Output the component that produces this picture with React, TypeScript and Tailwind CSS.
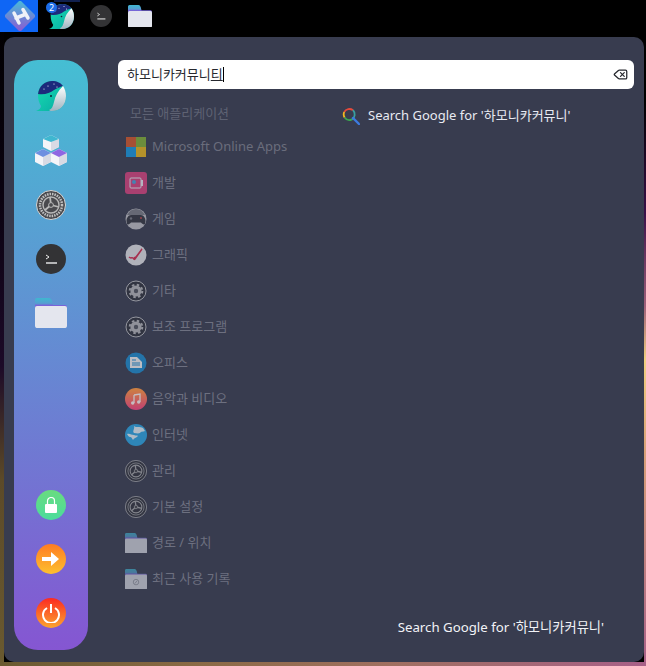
import { Delete } from "lucide-react";

const font = "font-['Noto_Sans','Noto_Sans_CJK_KR',sans-serif]";

function Whale({ size = 30, id }: { size?: number; id: string }) {
  return (
    <svg width={size} height={size} viewBox="0 0 30 30">
      <defs>
        <linearGradient id={`${id}b`} x1="0" y1="0" x2="1" y2="1">
          <stop offset="0" stopColor="#19e0b0" />
          <stop offset="1" stopColor="#06a8a4" />
        </linearGradient>
        <linearGradient id={`${id}h`} x1="0" y1="0" x2="0" y2="1">
          <stop offset="0" stopColor="#ffffff" />
          <stop offset="1" stopColor="#9fb4c0" />
        </linearGradient>
      </defs>
      <path d="M2 14C2 6 8 0 16 0c8 0 14 6 14 15s-6 15-14 15c-5 0-11 1-16 0 3-1 5-3 5-5-2-3-3-7-3-11z" fill={`url(#${id}b)`} />
      <path d="M2 13C3 5 9 0 16 0c5 0 9 2 11 5-3 1-6 2-9 4-4 3-9 5-16 4z" fill="#1c2a7c" />
      <path d="M27 5c2 3 3 6 3 10 0 9-6 15-14 15-1 0-2 0-3-1 3-1 4-4 5-8 1-6 4-11 9-16z" fill={`url(#${id}h)`} />
      <circle cx="12" cy="5" r=".6" fill="#fff" />
      <circle cx="18" cy="3" r=".6" fill="#fff" />
      <circle cx="21" cy="6" r=".6" fill="#fff" />
      <circle cx="8" cy="8" r=".6" fill="#fff" />
      <circle cx="15" cy="15" r="1" fill="#123" />
    </svg>
  );
}

function Terminal({ size = 30 }: { size?: number }) {
  return (
    <svg width={size} height={size} viewBox="0 0 30 30">
      <circle cx="15" cy="15" r="15" fill="#333335" />
      <path d="M10 11l3 2-3 2" fill="none" stroke="#eee" strokeWidth="1" />
      <path d="M10 19h11" stroke="#eee" strokeWidth="1.4" />
    </svg>
  );
}

function Folder({ w = 32, dim = false, clock = false, id }: { w?: number; dim?: boolean; clock?: boolean; id: string }) {
  return (
    <svg width={w} height={w * 0.94} viewBox="0 0 32 30" className={dim ? "opacity-60" : ""}>
      <defs>
        <linearGradient id={id} x1="0" y1="0" x2="0" y2="1">
          <stop offset="0" stopColor="#3fb7d0" />
          <stop offset="0.35" stopColor="#559fd0" />
          <stop offset="0.5" stopColor="#7a62d8" />
        </linearGradient>
      </defs>
      <path d="M0 2q0-2 2-2h12q2 0 3 3l1 4h12q2 0 2 2v6H0z" fill={`url(#${id})`} />
      <rect x="0" y="8" width="32" height="22" rx="2" fill="#e4e6ee" />
      {clock && <circle cx="16" cy="19" r="4" fill="none" stroke="#8a8d98" strokeWidth="1" />}
      {clock && <path d="M14.5 21l3-4" stroke="#8a8d98" strokeWidth="1" />}
    </svg>
  );
}

function Gear() {
  return (
    <svg width="22" height="22" viewBox="0 0 22 22" className="opacity-55">
      <circle cx="11" cy="11" r="10" fill="#2c2e36" stroke="#e0e0e0" strokeWidth="1" />
      <circle cx="11" cy="11" r="6.300" fill="none" stroke="#d8d8d8" strokeWidth="2" strokeDasharray="2.500 2.450" />
      <circle cx="11" cy="11" r="5.600" fill="#d8d8d8" />
      <circle cx="11" cy="11" r="2.200" fill="#5a5c64" />
    </svg>
  );
}

function Settings({ size = 22, dim = true }: { size?: number; dim?: boolean }) {
  return (
    <svg width={size} height={size} viewBox="0 0 30 30" className={dim ? "opacity-60" : ""}>
      <circle cx="15" cy="15" r="14.500" fill={dim ? "#30323a" : "#4a4a4e"} stroke="#d6d6d6" strokeWidth="1" />
      <circle cx="15" cy="15" r="11" fill="none" stroke="#c0c0c0" strokeWidth={dim ? 1 : 2.500} strokeDasharray={dim ? undefined : "1.500 1"} />
      <circle cx="15" cy="15" r="8" fill="none" stroke="#b8b8b8" strokeWidth="1.400" />
      <path d="M15 15l-1-8M15 15l-6 5M15 15l8 2" stroke="#b8b8b8" strokeWidth="1.800" />
      <circle cx="15" cy="15" r="2.400" fill="#4a4a4e" stroke="#b8b8b8" strokeWidth="1" />
    </svg>
  );
}

const apps = [
  {
    label: "개발",
    icon: (
      <svg width="22" height="22" viewBox="0 0 22 22" className="opacity-70">
        <rect width="22" height="22" rx="3" fill="#d9427f" />
        <rect x="5" y="6" width="11" height="10" rx="1" fill="none" stroke="#e9e9f0" strokeWidth="1" />
        <path d="M16 8h2v6h-2z" fill="#e9e9f0" />
        <circle cx="9" cy="10" r="2" fill="#4aa0dc" />
      </svg>
    ),
  },
  {
    label: "게임",
    icon: (
      <svg width="22" height="22" viewBox="0 0 22 22" className="opacity-60">
        <circle cx="11" cy="11" r="10.500" fill="#d6d6da" />
        <path d="M2 7c2-4 5-6 9-6s7 2 9 6z" fill="#85878f" />
        <path d="M1.500 13c0-3 2-6 4.500-6h10c2.500 0 4.500 3 4.500 6l-.5 3c-1 1-3 0-4-1.500H6c-1 1.500-3 2.500-4 1.500z" fill="#33353d" />
        <circle cx="16" cy="10" r="1" fill="#d84a4a" />
        <circle cx="6" cy="10.500" r="1.200" fill="#85878f" />
      </svg>
    ),
  },
  {
    label: "그래픽",
    icon: (
      <svg width="22" height="22" viewBox="0 0 22 22" className="opacity-70">
        <circle cx="11" cy="11" r="10.500" fill="#e4e4e8" />
        <path d="M4 13c2 2 3 0 4 1s1 2 2 1l7-10-6 8-2 1" fill="none" stroke="#d52c4f" strokeWidth="1.500" />
      </svg>
    ),
  },
  { label: "기타", icon: <Gear /> },
  { label: "보조 프로그램", icon: <Gear /> },
  {
    label: "오피스",
    icon: (
      <svg width="22" height="22" viewBox="0 0 22 22" className="opacity-70">
        <circle cx="11" cy="11" r="10.500" fill="#1c8ccf" />
        <path d="M5 5h7l5 5v6H5z" fill="#f4f4f4" />
        <path d="M7 8h4M7 11h8M7 13h8" stroke="#1c8ccf" strokeWidth="1" />
      </svg>
    ),
  },
  {
    label: "음악과 비디오",
    icon: (
      <svg width="22" height="22" viewBox="0 0 22 22" className="opacity-75">
        <defs>
          <linearGradient id="mu" x1="0" y1="0" x2="0" y2="1">
            <stop offset="0" stopColor="#ff9a3c" />
            <stop offset="1" stopColor="#f0437f" />
          </linearGradient>
        </defs>
        <circle cx="11" cy="11" r="11" fill="url(#mu)" />
        <path d="M9 7l6-1v8M9 7v8" fill="none" stroke="#f5e8e8" strokeWidth="1.300" />
        <circle cx="7.700" cy="15" r="1.700" fill="#f5e8e8" />
        <circle cx="13.700" cy="14" r="1.700" fill="#f5e8e8" />
      </svg>
    ),
  },
  {
    label: "인터넷",
    icon: (
      <svg width="22" height="22" viewBox="0 0 22 22" className="opacity-75">
        <circle cx="11" cy="11" r="11" fill="#2b9fdc" />
        <path d="M9 2c2 2 6 0 9 2l2 3c-2 1-4 0-5 2-2 1-4 0-6 0-2-2 1-4 0-7zM2 10c3-1 4 1 7 1 2 1 3 0 4 1-2 2-4 2-5 4-1-1-1-3-3-3-1 0-2-1-3-3z" fill="#d7e6ee" />
      </svg>
    ),
  },
  { label: "관리", icon: <Settings /> },
  { label: "기본 설정", icon: <Settings /> },
  { label: "경로 / 위치", icon: <Folder w={22} dim id="f1" /> },
  { label: "최근 사용 기록", icon: <Folder w={22} dim clock id="f2" /> },
];

export default function App() {
  return (
    <div className={`${font} relative h-[666px] w-[646px] overflow-hidden bg-black`}>
      {/* wallpaper showing around the panel */}
      <div className="absolute inset-y-0 left-0 w-[4px] bg-[linear-gradient(180deg,#000_0%,#0a0210_30%,#1c0a28_55%,#5c4a28_72%,#6a5a30_100%)]" />
      <div className="absolute inset-y-0 right-0 w-[2px] bg-[linear-gradient(180deg,#000_15%,#3a1048_32%,#a0607a_46%,#f0d080_54%,#d8a078_68%,#a86088_100%)]" />
      <div className="absolute inset-x-0 bottom-0 h-[4px] bg-[linear-gradient(90deg,#6a5a30,#8a6a45_30%,#a07060_60%,#a86088)]" />
      <div className="relative flex h-full flex-col">
        <div className="flex h-[32px] items-center bg-black">
          <div className="flex h-[32px] w-[38px] items-center justify-center bg-[#0f66f5]">
            <svg width="34" height="32" viewBox="0 0 34 32">
              <defs>
                <linearGradient id="hm" x1="0" y1="0" x2="0" y2="1">
                  <stop offset="0" stopColor="#4ab8d8" />
                  <stop offset="1" stopColor="#8a5bd2" />
                </linearGradient>
              </defs>
              <path d="M17 1l2 0 14 14v2L19 31h-2L3 17v-2z" fill="url(#hm)" />
              <path d="M12 13l5 10M21 9.500l5 8.500M14 18l9-3.500" fill="none" stroke="#eef1f8" strokeWidth="3.500" strokeLinecap="round" />
            </svg>
          </div>
          <div className="relative ml-[9px] flex h-[32px] w-[28px] items-center justify-center">
            <div className="absolute left-[7px] top-0 h-[2px] w-[26px] bg-[#10204e]" />
            <Whale size={25} id="w1" />
            <span className="absolute left-[-1px] top-[2px] flex h-[11px] w-[11px] items-center justify-center rounded-full bg-[#1c6ce8] text-[9px] leading-none text-white">2</span>
          </div>
          <div className="ml-[15px]">
            <Terminal size={22} />
          </div>
          <div className="ml-[16px]">
            <Folder w={24} id="f3" />
          </div>
        </div>

        <div className="ml-[4px] mr-[2px] mt-[5px] flex h-[625px] rounded-[10px] bg-[#383c4f] pl-[10px]">
          <aside className="mt-[23px] flex h-[590px] w-[74px] flex-col items-center rounded-[24px] bg-[linear-gradient(180deg,#45bed3,#8556d2)] pb-[22px] pt-[21px]">
            <div className="flex flex-col items-center gap-[24px]">
              <Whale id="w2" />
              <svg width="32" height="31" viewBox="0 0 32 31">
                <path d="M16 0l8 4v8l-8 4-8-4V4z" fill="#f4f4f8" />
                <path d="M16 7l8-3v8l-8 4z" fill="#d8dae4" />
                <path d="M8 4l8-4 8 4-8 3z" fill="#3fb7d0" />
                <path d="M8 14l8 4v9l-8 4-8-4v-9z" fill="#f4f4f8" />
                <path d="M8 22l8-4v9l-8 4z" fill="#d8dae4" />
                <path d="M8 14l8 4-8 4-8-4z" fill="#6e8fe0" />
                <path d="M24 14l8 4v9l-8 4-8-4v-9z" fill="#f4f4f8" />
                <path d="M24 22l8-4v9l-8 4z" fill="#d8dae4" />
                <path d="M24 14l8 4-8 4-8-4z" fill="#8f66e2" />
              </svg>
              <Settings size={30} dim={false} />
              <Terminal />
              <Folder id="f4" />
            </div>
            <div className="mt-auto flex flex-col items-center gap-[24px]">
              <div className="flex h-[30px] w-[30px] items-center justify-center rounded-full bg-[linear-gradient(180deg,#69dc80,#4bdc9c)]">
                <svg width="14" height="16" viewBox="0 0 14 16">
                  <rect x="1" y="7" width="12" height="9" rx="1" fill="#fff" />
                  <path d="M3.500 7V4a3.500 3.500 0 0 1 7 0v3" fill="none" stroke="#fff" strokeWidth="1.200" />
                </svg>
              </div>
              <div className="flex h-[30px] w-[30px] items-center justify-center rounded-full bg-[linear-gradient(180deg,#ff7c22,#fdc02f)]">
                <svg width="18" height="14" viewBox="0 0 18 14">
                  <path d="M0 5h9V0l8 7-8 7V9H0z" fill="#fff" />
                </svg>
              </div>
              <div className="flex h-[30px] w-[30px] items-center justify-center rounded-full bg-[linear-gradient(180deg,#fb2a22,#fca52f)]">
                <svg width="20" height="20" viewBox="0 0 20 20">
                  <path d="M6 5a8 8 0 1 0 8 0" fill="none" stroke="#fff" strokeWidth="2" />
                  <path d="M10 1v9" stroke="#fff" strokeWidth="2" />
                </svg>
              </div>
            </div>
          </aside>

          <main className="ml-[30px] flex flex-1 flex-col pr-[10px] pt-[23px]">
            <div className="flex h-[29px] items-center justify-between rounded-[6px] bg-white pl-[9px] pr-[6px] text-[13px] text-[#26282e]">
              <span className="flex items-center">
                하모니카커뮤니<span className="underline">티</span>
                <span className="h-[15px] w-px bg-black" />
              </span>
              <Delete size={15} strokeWidth={2} className="text-[#26282e]" />
            </div>
            <div className="mt-[12px] flex">
              <div className="w-[224px]">
                <div className="flex h-[26px] items-center pl-[12px] text-[13px] text-[#5e6273]">모든 애플리케이션</div>
                <div className="mt-[2px] flex flex-col">
                  <div className="flex h-[36px] items-center gap-[4px] pl-[8px] text-[13px] text-[#6a6d7c]">
                    <div className="grid h-[20px] w-[20px] grid-cols-2">
                      <span className="bg-[#a64f34]" />
                      <span className="bg-[#6c8d3c]" />
                      <span className="bg-[#1f7db6]" />
                      <span className="bg-[#b4922a]" />
                    </div>
                    <span className="ml-[2px]">Microsoft Online Apps</span>
                  </div>
                  {apps.map((a) => (
                    <div key={a.label} className="flex h-[36px] items-center gap-[5px] pl-[7px] text-[13px] text-[#6d7080]">
                      <div className="flex w-[22px] justify-center">{a.icon}</div>
                      <span>{a.label}</span>
                    </div>
                  ))}
                </div>
              </div>
              <div className="mt-[5px] flex h-[28px] items-start">
                <div className="flex items-center gap-[8px] text-[13px] text-[#e8eaf2]">
                  <svg width="18" height="18" viewBox="0 0 18 18">
                    <path d="M11 3.200A6 6 0 0 0 2.200 5" fill="none" stroke="#e34a3c" strokeWidth="1.800" />
                    <path d="M2.200 5A6 6 0 0 0 2.600 10.500" fill="none" stroke="#f2b822" strokeWidth="1.800" />
                    <path d="M2.600 10.500A6 6 0 0 0 10 12.400" fill="none" stroke="#3aa84f" strokeWidth="1.800" />
                    <path d="M10 12.400A6 6 0 0 0 11 3.200" fill="none" stroke="#38a0a0" strokeWidth="1.800" />
                    <path d="M11 11l6 6" stroke="#3d7be0" strokeWidth="2.400" strokeLinecap="round" />
                  </svg>
                  <span>Search Google for '하모니카커뮤니'</span>
                </div>
              </div>
            </div>
            <div className="mb-[24px] mt-auto flex justify-end pr-[30px] text-[13.250px] text-[#f2f3f7]">
              Search Google for '하모니카커뮤니'
            </div>
          </main>
        </div>
      </div>
    </div>
  );
}
